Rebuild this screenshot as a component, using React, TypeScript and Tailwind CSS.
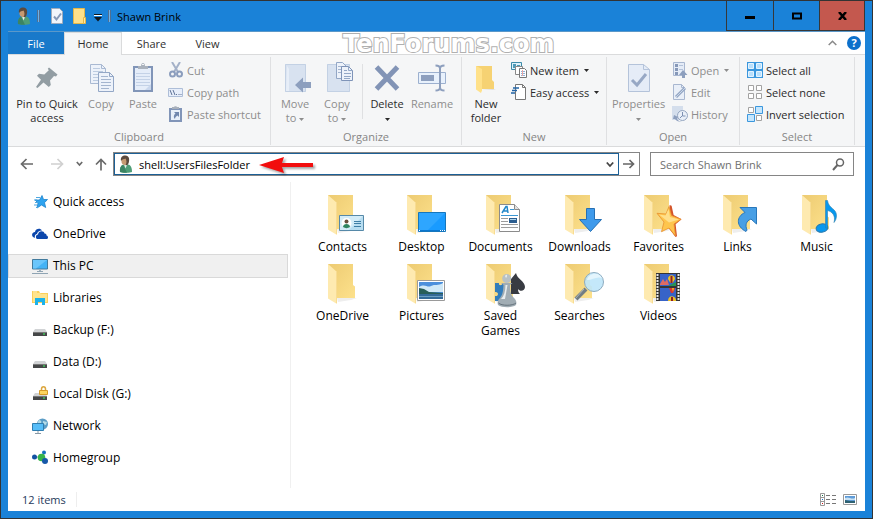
import React, { useState } from 'react';

const NAV_ITEMS = [
  { id: 'quick', label: 'Quick access' },
  { id: 'onedrive', label: 'OneDrive' },
  { id: 'pc', label: 'This PC' },
  { id: 'libraries', label: 'Libraries' },
  { id: 'drive-f', label: 'Backup (F:)' },
  { id: 'drive-d', label: 'Data (D:)' },
  { id: 'locked', label: 'Local Disk (G:)' },
  { id: 'network', label: 'Network' },
  { id: 'homegroup', label: 'Homegroup' }
];

const FOLDERS = [
  'Contacts', 'Desktop', 'Documents', 'Downloads', 'Favorites', 'Links', 'Music',
  'OneDrive', 'Pictures', 'Saved Games', 'Searches', 'Videos'
];

const Icon: React.FC<{ size: number; children: React.ReactNode }> = ({ size, children }) => (
  <svg width={size} height={size} viewBox={`0 0 ${size} ${size}`} fill="none" className="shrink-0" aria-hidden="true">
    {children}
  </svg>
);

const Caret: React.FC = () => (
  <svg width="5" height="3" viewBox="0 0 5 3" className="inline-block shrink-0 align-middle" aria-hidden="true">
    <path d="M0 0h5L2.5 3z" fill="currentColor" />
  </svg>
);

const UserIcon: React.FC = () => (
  <Icon size={18}>
    <path d="M3 17c-.5-4 1-7 4-7.500h4c3 .5 4 3.500 4 7.500-2 1-9 1-12 0z" fill="#4f9e78" />
    <path d="M3 17c-.5-3.500.5-6.500 3-7.300L10 17.700c-3 .2-5.500 0-7-.7z" fill="#3c8463" />
    <path d="M7 9.500l1.500 4L10 10z" fill="#e8efe9" />
    <ellipse cx="8" cy="5.700" rx="3.600" ry="4.400" fill="#c69a72" />
    <path d="M4 6c-.8-4.500 2-5.700 4.500-5.500C12 .8 13 4 11.600 8c-.6 2-2 2.500-3 2C10 8 9.500 5 8.500 3.500 7 4.300 5 4.200 4 6z" fill="#5b4a3d" />
  </Icon>
);

const PinIcon = () => (
  <Icon size={32}>
    <path d="M18 5.500l8.500 7-1.500 2-2-.6-4 4.500.8 4.600-2 2-5.300-4.600L6.500 26 5 25l5-7.300-4-4 2-2 5.300.7 4.500-4.200-1-1.500z" fill="#929da3" />
  </Icon>
);

const CopyIcon = () => (
  <Icon size={32}>
    <path d="M5.500 2.500h11l4 4v15h-15z" fill="#edf2fa" stroke="#a9b9d2" />
    <path d="M16.500 2.500v4h4" stroke="#a9b9d2" />
    <path d="M8 6.500h7M8 9.500h10M8 12.500h10M8 15.500h10M8 18.500h8" stroke="#bccbe0" />
    <path d="M13.500 10.500h11l4 4v15h-15z" fill="#edf2fa" stroke="#93a7c6" />
    <path d="M24.500 10.500v4h4" stroke="#93a7c6" />
    <path d="M16 14.500h7M16 17.500h10M16 20.500h10M16 23.500h10M16 26.500h8" stroke="#a4b5cf" />
  </Icon>
);

const PasteIcon = () => (
  <Icon size={32}>
    <path d="M6 4h20v26H6z" fill="#8195b8" />
    <path d="M8 6h16v22H8z" fill="#e5edf9" />
    <path d="M9 11.500h14M9 14.500h14M9 17.500h14M9 20.500h14M9 23.500h14" stroke="#c4d2e7" />
    <path d="M11 7V4h3c0-4 4-4 4 0h3v3z" fill="#a9b1bc" />
    <path d="M15 2.500h2" stroke="#f5f6f7" />
    <path d="M18 28h6v-6z" fill="#c9d7ed" />
  </Icon>
);

const MoveIcon = () => (
  <Icon size={32}>
    <path d="M6 2h21v28H6z" fill="#d8e2f0" />
    <path d="M6.500 2.500h20v27h-20z" stroke="#c3d1e4" />
    <path d="M8 4l2 3v22H7z" fill="#e7eef8" />
    <path d="M16 23l8-7.500V20h8v6h-8v4.500z" fill="#8d9fbe" />
  </Icon>
);

const CopyToIcon = () => (
  <Icon size={32}>
    <path d="M6 2h23v28H6z" fill="#d8e2f0" />
    <path d="M6.500 2.500h22v27h-22z" stroke="#c3d1e4" />
    <path d="M15.500.500h6l4 4v12h-10z" fill="#edf2fa" stroke="#93a7c6" />
    <path d="M17 4.500h4M17 7.500h4M17 10.500h4" stroke="#a4b5cf" />
    <path d="M20.500 4.500h7l4 4v10h-11z" fill="#edf2fa" stroke="#7f94b8" />
    <path d="M27.500 4.500v4h4M23 8.500h3M23 11.500h7M23 14.500h7M23 16.500h6" stroke="#93a7c6" />
  </Icon>
);

const DeleteIcon = () => (
  <Icon size={32}>
    <path d="M5.500 5l21 22M26.500 5l-21 22" stroke="#8294b6" strokeWidth="5" />
  </Icon>
);

const RenameIcon = () => (
  <Icon size={32}>
    <path d="M2.500 10.500h27v11h-27z" fill="#e8f1fc" stroke="#9cb0cf" />
    <path d="M5 13h13v6H5z" fill="#8d9fbe" />
    <path d="M19.500 3.500c3 0 4.500.5 4.500 3v19c0 2.500-1.500 3-4.500 3M28.500 3.500c-3 0-4.500.5-4.500 3v19c0 2.500 1.500 3 4.500 3" stroke="#8d9fbe" strokeWidth="2" />
  </Icon>
);

const NewFolderIcon = () => (
  <Icon size={32}>
    <path d="M6 4h16v14l2 2v7H12z" fill="#f6d273" />
    <path d="M6 4l6 3v21.500L11 31l-5-3.500z" fill="#ffe18a" />
    <path d="M24 27h2l-3 1H12z" fill="#ddd" />
  </Icon>
);

const PropertiesIcon = () => (
  <Icon size={32}>
    <path d="M5.500 2.500h15l6 5v22h-21z" fill="#e5ecf7" stroke="#b4c3da" />
    <path d="M20.500 2.500v5h6" stroke="#b4c3da" />
    <path d="M9 18l5 5 9-11" stroke="#97a8c5" strokeWidth="3" />
  </Icon>
);

const CutIcon = () => (
  <Icon size={16}>
    <path d="M4 0l6 10M12 0L6 10" stroke="#a4b1c8" strokeWidth="2" />
    <ellipse cx="4.500" cy="12" rx="2.500" ry="2.500" stroke="#8b9dbd" strokeWidth="2" />
    <ellipse cx="11.500" cy="12" rx="2.500" ry="2.500" stroke="#8b9dbd" strokeWidth="2" />
  </Icon>
);

const CopyPathIcon = () => (
  <Icon size={16}>
    <path d="M.5 4.500h14v8H.5z" fill="#e7eefa" stroke="#aebed8" />
    <path d="M2 6l2 5M5 6l2 5M8 10.500h1M10.500 10.500h1M12.500 10.500h1" stroke="#5f7397" />
  </Icon>
);

const PasteShortcutIcon = () => (
  <Icon size={16}>
    <path d="M1 2h13v14H1z" fill="#8195b8" />
    <path d="M3 4h9v10H3z" fill="#e9f0fa" />
    <path d="M4 3V1h2c0-1 3-1 3 0h2v2z" fill="#a9b1bc" />
    <path d="M6 6h5v5L9.500 9.500C8 10.500 7 11.500 7 13c-2-2-1-4.500.5-5.500z" fill="#7187ae" />
  </Icon>
);

const NewItemIcon = () => (
  <Icon size={16}>
    <path d="M.5.500h10v7H.5z" fill="#dff1fa" stroke="#3c8ba8" />
    <path d="M2 2h3v4H2zM6 3h3v1H6z" fill="#4d9bb8" />
    <path d="M4.500 4.500h7v8h-7z" fill="#fff" stroke="#888" />
    <path d="M8.500 6.500h5l2 2v7h-7z" fill="#fff" stroke="#777" />
    <path d="M10 9.500h4M10 11.500h4M10 13.500h4" stroke="#8fb0d6" />
    <path d="M11.500 8v6" stroke="#e9a7a7" />
  </Icon>
);

const EasyAccessIcon = () => (
  <Icon size={16}>
    <path d="M4.500.500h7l3 3v12h-10z" fill="#fff" stroke="#777" />
    <path d="M11.500.500v3h3" stroke="#777" />
    <path d="M2 4h6M1 6.500h5M0 9h4" stroke="#2163a5" strokeWidth="1.500" />
  </Icon>
);

const OpenIcon = () => (
  <Icon size={16}>
    <path d="M1.500.500h11v13h-11z" fill="#e5ecf7" stroke="#a8b7d0" />
    <path d="M3 2h3v3H3zM3 6h3v3H3zM3 10h3v3H3z" fill="#8698b8" />
    <path d="M7 3.500h4M7 7.500h4" stroke="#b4c3da" />
    <path d="M11 8l4.500 5H13v3h-3v-3H7z" fill="#8d9fbe" />
  </Icon>
);

const EditIcon = () => (
  <Icon size={16}>
    <path d="M1.500.500h8l3 3v12h-11z" fill="#e9eff8" stroke="#a8b7d0" />
    <path d="M9.500.500v3h3" stroke="#a8b7d0" />
    <path d="M4 13L13 4" stroke="#94a7c5" strokeWidth="3" />
    <path d="M4 13L13 4" stroke="#c9d6e8" />
  </Icon>
);

const HistoryIcon = () => (
  <Icon size={16}>
    <path d="M0 0h11v14H0z" fill="#d4deec" />
    <circle cx="10.500" cy="9.500" r="5" fill="#e9eff8" stroke="#94a5c0" />
    <path d="M10.500 6v4h3M8 12l2-2" stroke="#7d90b2" />
    <path d="M2 9l4 2-1 2c1 2 4 3 6 3-4 0-7-1-8-3H1z" fill="#8d9fbe" />
  </Icon>
);

const SelectAllIcon = () => (
  <Icon size={16}>
    <path d="M0 0h16v16H0z" fill="#3b97dd" />
    <path d="M1.500 1.500h5v5h-5zM9.500 1.500h5v5h-5zM1.500 9.500h5v5h-5zM9.500 9.500h5v5h-5z" fill="#b9e0fc" stroke="#e5f4ff" />
  </Icon>
);

const SelectNoneIcon = () => (
  <Icon size={16}>
    <path d="M1.500 1.500h5v5h-5zM9.500 1.500h5v5h-5zM1.500 9.500h5v5h-5zM9.500 9.500h5v5h-5z" fill="#fff" stroke="#a2a2a2" />
  </Icon>
);

const InvertIcon = () => (
  <Icon size={16}>
    <path d="M1.500 1.500h5v5h-5zM9.500 9.500h5v5h-5z" fill="#fff" stroke="#a2a2a2" />
    <path d="M8.500.500h7v7h-7zM.5 8.500h7v7h-7z" fill="#c5e6fd" stroke="#3b97dd" />
  </Icon>
);

const NavIcon: React.FC<{ id: string }> = ({ id }) => {
  switch (id) {
    case 'quick':
      return (
        <Icon size={16}>
          <path d="M10 1.500l1.500 4h4l-3 3.200 1.200 4.800L9.500 11 5 14l1-5-3-3h4.500z" fill="#2ea3ef" stroke="#1c82cc" strokeWidth=".8" />
          <path d="M4 3.500h4M2 6h3M3 8.500h3M2 11h3M4 13.500h2" stroke="#4fa8e0" />
        </Icon>
      );
    case 'onedrive':
      return (
        <Icon size={16}>
          <path d="M1 11c-2-2-.5-5 2-5 .5-3 5-4.500 7-1.500-3 0-4.500 1.500-5 3.500-2 .3-2.500 2-2 4z" fill="#0c47ac" />
          <path d="M5 13c-2-1.500-1-4.500 1-4.500.5-4 6-4 6.500-1 2 0 2 1.500 2 2 2 .5 2 3.500 0 3.500z" fill="#0c47ac" />
        </Icon>
      );
    case 'pc':
      return (
        <Icon size={16}>
          <path d="M.5 1.500h15v9.500H.5z" fill="#44b3f5" stroke="#427b9d" />
          <path d="M1 2h14L4 10.500H1z" fill="#6ac6fb" />
          <path d="M7 11.500h2V13H7z" fill="#9fb2c0" />
          <path d="M5 13.500h6M0 15.500h16" stroke="#8fa4b3" />
        </Icon>
      );
    case 'libraries':
      return (
        <Icon size={16}>
          <path d="M0 1h7l1 2h8v10H0z" fill="#fbcf5b" />
          <path d="M1 3h7l1 1h6v8H1z" fill="#ffe48d" />
          <path d="M3 8h10v7h-3v-3H6v3H3z" fill="#1cb2ea" />
          <path d="M1 2h4" stroke="#fff3c6" />
        </Icon>
      );
    case 'network':
      return (
        <Icon size={16}>
          <circle cx="10.500" cy="6" r="5.500" fill="#5b9dc6" />
          <path d="M7 2c2 0 3 2 2 3s-3 1-3 0 0-2 1-3zM11 3l4 1-1 3-3-1z" fill="#b4dbe7" />
          <path d="M.5 5.500h11v7H.5z" fill="#56bdf8" stroke="#307eb0" />
          <path d="M6 13v2M3 15.500h6" stroke="#8799a6" />
        </Icon>
      );
    case 'homegroup':
      return (
        <Icon size={16}>
          <path d="M3 7l7 0 2-4M10 7l3 4" stroke="#8aacc0" />
          <circle cx="2.500" cy="7" r="2.500" fill="#1352a2" />
          <circle cx="12" cy="2.500" r="2" fill="#1670bd" />
          <circle cx="9.500" cy="7.500" r="3.800" fill="#37b44a" />
          <circle cx="13" cy="11" r="3" fill="#1758a8" />
        </Icon>
      );
    default:
      return (
        <Icon size={16}>
          <path d="M3 7h10l2 3H1z" fill="#d1d3d5" />
          <path d="M1 10h14v4H1z" fill="#454748" />
          <path d="M1 10.500h14" stroke="#777" />
          <path d="M11 11.500h2v1h-2z" fill="#3fff60" />
          {id === 'locked' && (
            <>
              <path d="M9.500 5V3c0-3 4-3 4 0v2" stroke="#dca73f" strokeWidth="1.500" />
              <path d="M7.500 4.500h8v4h-8z" fill="#fcd45e" stroke="#d79b28" />
            </>
          )}
        </Icon>
      );
  }
};

const FolderOverlay: React.FC<{ name: string }> = ({ name }) => {
  switch (name) {
    case 'Contacts':
      return (
        <>
          <path d="M20.500 24.500h24v15h-24z" fill="#b7ddf1" stroke="#5689a8" />
          <path d="M21 25h23L30 39h-9z" fill="#d3ecf8" />
          <circle cx="27.500" cy="32" r="5" fill="#fff" />
          <path d="M24 36c0-4 7-4 7 0-2 1.500-5 1.500-7 0z" fill="#2f8561" />
          <circle cx="27.500" cy="30.500" r="2" fill="#69513f" />
          <path d="M35 30.500h7M35 32.500h7M35 35.500h7" stroke="#3e7fa6" />
        </>
      );
    case 'Desktop':
      return (
        <>
          <path d="M20.500 21.500h27v19h-27z" fill="#199bff" stroke="#1677bd" />
          <path d="M21 22h26L29 40h-8z" fill="#2ea6ff" />
          <path d="M21 39.500h26" stroke="#0a77cf" />
          <path d="M21 39.500h1M42 39.500h1M44 39.500h1M46 39.500h1" stroke="#fff" />
        </>
      );
    case 'Documents':
      return (
        <>
          <path d="M22.500 13.500h15l5 5v22h-20z" fill="#fff" stroke="#8b8b8b" />
          <path d="M37.500 13.500v5h5" fill="#e2e2e2" stroke="#8b8b8b" />
          <path d="M25 22l4-6.500h1l1 6.500M27 20h4" stroke="#2287c9" strokeWidth="1.500" />
          <path d="M33 18.500h4M24 24.500h17" stroke="#3c98d4" />
          <path d="M24 27.500h7M24 30.500h7M24 33.500h17M24 36.500h17" stroke="#9c9c9c" />
          <path d="M32 27h8v5h-8z" fill="#2c5d8f" />
          <path d="M33 28h6v1h-6z" fill="#abd6ef" />
        </>
      );
    case 'Downloads':
      return <path d="M30.500 17.500h8v11h7L34.500 40.500 23.500 28.500h7z" fill="#3f9aeb" stroke="#2670b4" />;
    case 'Favorites':
      return (
        <>
          <path d="M34.600 14l2 .8 2 9.200 8 4.300-6 5 1.400 12-1.500.7-6.500-8.500z" fill="#d4542a" />
          <path d="M34 15.500l2.500 9 9.500 3.800-7 4.700 1.500 12-6.500-8-7.500 3.700 2.500-9.700-7-8.700 9 .7z" fill="#fec54d" stroke="#e9912e" strokeWidth=".8" />
          <path d="M33.500 18l1.500 8 9 2.500-10 3-10-8 6.500 1z" fill="#ffdf8b" />
        </>
      );
    case 'Links':
      return <path d="M26 16.500h16.500V33L37 28c-5 2-6 6-4 11l-1 1.500c-10-5-10-15-1-19z" fill="#489fe5" stroke="#2977ba" />;
    case 'Music':
      return (
        <>
          <ellipse cx="29" cy="37" rx="6" ry="4.200" fill="#0798ef" stroke="#2779ad" transform="rotate(-12 29 37)" />
          <path d="M32.500 37V9.500h2c1 8 9 8 9 15 0 3-1 5-2.500 7 2-7-2-11-6.500-12V37z" fill="#0798ef" stroke="#2e7fac" strokeWidth=".6" />
        </>
      );
    case 'Pictures':
      return (
        <>
          <path d="M19.500 20.500h27v20h-27z" fill="#fff" stroke="#9a9a9a" />
          <path d="M21 22h24v17H21z" fill="#4b8fdc" />
          <path d="M21 27c6-4 8 1 12-1s7 0 12-3v9H21z" fill="#cfe8f7" />
          <path d="M21 28l5 1 5 3 14 1v1H21z" fill="#285e58" />
          <path d="M21 34h24v5H21z" fill="#336a98" />
          <path d="M21 36.500h24" stroke="#6b9fc2" />
        </>
      );
    case 'Saved Games':
      return (
        <>
          <path d="M18 23h4c-1 3 4 3 3 0h8v18H18v-5c4 1 4-5 0-4z" fill="#327dbb" />
          <path d="M39 13c1 6 9 8 9 14 0 4-5 5-7 2 0 3 1 4 2 5h-9V19z" fill="#383b42" />
          <circle cx="29.700" cy="18.500" r="4.500" fill="#b8c1c5" />
          <path d="M24 23h11.500l-2.500 2c0 7 1 10 4 13 2 2 3 4 2 7-4 3-14 3-18 0-1-3 0-5 2-7 3-4 3-7 3.500-13z" fill="#a1adb4" />
          <path d="M28 16c2-3 3 0 1 2zM28.500 25h2l-2.500 14h-4c3-3 4.500-8 4.500-14z" fill="#e8edef" />
          <path d="M21.500 43c3 3 14 3 17.500 0" stroke="#65737c" />
        </>
      );
    case 'Searches':
      return (
        <>
          <path d="M30 29L20 39" stroke="#737d83" strokeWidth="4" />
          <path d="M28 29L19 39" stroke="#aeb6b9" />
          <circle cx="38" cy="22" r="9.500" fill="#bee5fa" fillOpacity=".9" stroke="#8dabbf" />
          <path d="M31 20c1-7 12-9 15-2-5-2-10 2-15 2z" fill="#e4f5fd" />
        </>
      );
    case 'Videos':
      return (
        <>
          <path d="M21 13h24v28H21z" fill="#353535" />
          <path d="M22.500 14v27M43.500 14v27" stroke="#e8e8e8" strokeWidth="2" strokeDasharray="2 1" />
          <path d="M25 14h16v12H25zM25 28h16v13H25z" fill="#3763c8" />
          <path d="M25 24l3-5 2 3 2-3 2 6h-9z" fill="#e06b62" />
          <path d="M33 26h8v-4z" fill="#259454" />
          <path d="M33 19c0-5 7-5 7 0l-2.500 4h-2z" fill="#edc027" />
          <path d="M35.500 16h2v7h-2z" fill="#8e1f28" />
          <path d="M34 28h6v1l-2 4h-2z" fill="#d9362f" />
          <path d="M37 28h2l-1 4z" fill="#edc027" />
          <path d="M33 41c0-6 7-6 8-1v1z" fill="#edc027" />
          <path d="M36 37h2v4h-2z" fill="#8e1f28" />
        </>
      );
    default:
      return null;
  }
};

const FolderIcon: React.FC<{ name: string }> = ({ name }) => (
  <Icon size={48}>
    <defs>
      <linearGradient id={`back-${name.charAt(0)}${name.length}`} x1="0" y1="0" x2="1" y2="1">
        <stop offset="0" stopColor="#edcb72" />
        <stop offset="1" stopColor="#fde18c" />
      </linearGradient>
    </defs>
    <path d="M18 38h20l-6 2-13 2z" fill="#eeeeee" />
    <path d="M9 4h25v21l2 1.500V38H18L9 30z" fill={`url(#back-${name.charAt(0)}${name.length})`} />
    <path d="M9 4l9 8v32l-9-5.500z" fill="#feeab0" />
    <path d="M17.500 12v31" stroke="#f8dc92" />
    <FolderOverlay name={name} />
  </Icon>
);

interface BigButtonProps {
  icon: React.ReactNode;
  width: string;
  disabled?: boolean;
  children: React.ReactNode;
}

const BigButton: React.FC<BigButtonProps> = ({ icon, width, disabled, children }) => (
  <button disabled={disabled} className={`${width} shrink-0 flex flex-col items-center pt-[3px] text-center leading-[14px] text-[#2b2b2b] disabled:text-[#8d8d8d]`}>
    {icon}
    <span className="mt-[3px] whitespace-nowrap">{children}</span>
  </button>
);

interface SmallButtonProps {
  icon: React.ReactNode;
  label: string;
  disabled?: boolean;
  menu?: boolean;
}

const SmallButton: React.FC<SmallButtonProps> = ({ icon, label, disabled, menu }) => (
  <button disabled={disabled} className="flex h-[22px] items-center gap-[3px] whitespace-nowrap text-[#2b2b2b] disabled:text-[#8d8d8d]">
    {icon}
    <span>{label}</span>
    {menu && <span className="ml-0.5 flex"><Caret /></span>}
  </button>
);

const RibbonGroup: React.FC<{ title: string; width: string; children: React.ReactNode }> = ({ title, width, children }) => (
  <section className={`${width} shrink-0 border-r border-[#dfe0e2] pt-0.5`}>
    <div className="flex h-[70px] items-start">{children}</div>
    <h2 className="text-center leading-4 text-[#858585]">{title}</h2>
  </section>
);

const TitleBar: React.FC = () => (
  <header className="flex h-[30px] items-stretch justify-between">
    <div className="flex items-center pl-[7px]">
      <UserIcon />
      <span className="ml-1 h-3 w-[3px] border-x border-[#4f6f92] bg-[#6db2ea]" />
      <button aria-label="Properties" className="ml-2.5">
        <Icon size={16}>
          <path d="M1.500.500h8l3 3v12h-11z" fill="#f1f5fb" stroke="#a0acbd" />
          <path d="M4 8.500l2.500 3 4.500-6" stroke="#8799b7" strokeWidth="2" />
        </Icon>
      </button>
      <button aria-label="New folder" className="ml-1.5">
        <Icon size={16}>
          <path d="M1.500.500h11v15h-11z" fill="#fde08a" stroke="#e4b748" />
          <path d="M11.500 9.500h2v6h-2z" fill="#ffe8a1" stroke="#e4b748" />
        </Icon>
      </button>
      <button aria-label="Customize Quick Access Toolbar" className="mt-1 ml-1.5">
        <svg width="8" height="8" viewBox="0 0 8 8" aria-hidden="true">
          <path d="M0 1h8" stroke="#fff" strokeWidth="2" />
          <path d="M0 .500h8" stroke="#101820" />
          <path d="M0 3h8L4 7.500z" fill="#101820" />
        </svg>
      </button>
      <span className="ml-1.5 h-3 w-[3px] border-x border-[#4f6f92] bg-[#6db2ea]" />
      <h1 className="ml-1.5 text-black">Shawn Brink</h1>
    </div>
    <div className="flex">
      <button aria-label="Minimize" className="flex w-[47px] items-center justify-center border-b border-l border-[#373737]">
        <svg width="10" height="3" className="mt-1"><path d="M0 0h10v3H0z" fill="#000" /></svg>
      </button>
      <button aria-label="Maximize" className="flex w-[46px] items-center justify-center border-b border-l border-[#373737]">
        <svg width="10" height="8"><path d="M1 1.500h8v5H1z" fill="none" stroke="#000" strokeWidth="2" /></svg>
      </button>
      <button aria-label="Close" className="flex w-[46px] items-center justify-center border-x border-b border-[#373737] bg-[#c4584e]">
        <svg width="9" height="8" viewBox="0 0 9 8"><path d="M1 0l7 8M8 0L1 8" stroke="#000" strokeWidth="2.500" /></svg>
      </button>
    </div>
  </header>
);

const Tabs: React.FC = () => (
  <nav className="flex h-[23px] items-stretch border-t border-[#5b98c9] bg-white text-[#2f2f2f]">
    <button className="w-14 bg-[#1979ca] text-white">File</button>
    <button className="relative z-10 -mb-px w-[58px] border-x border-t border-[#dadbdc] bg-[#f5f6f7] pb-0.5">Home</button>
    <button className="w-[59px]">Share</button>
    <button className="w-[53px]">View</button>
    <div className="relative z-10 ml-[109px] text-[24px] leading-[24px] font-bold text-white [-webkit-text-stroke:2px_#b0b0b0] [font-family:'DejaVu_Sans',sans-serif] [paint-order:stroke]">TenForums.com</div>
    <div className="ml-auto flex items-center gap-2.5 pr-1">
      <button aria-label="Minimize the Ribbon">
        <svg width="9" height="6" viewBox="0 0 9 6" fill="none"><path d="M.7 5l3.800-3.800L8.300 5" stroke="#8a8a8a" strokeWidth="1.500" /></svg>
      </button>
      <button aria-label="Help" className="flex h-3.5 w-3.5 items-center justify-center rounded-full bg-[#0c70cb] leading-[14px] font-bold text-white">?</button>
    </div>
  </nav>
);

const Ribbon: React.FC = () => (
  <div className="flex border-y border-[#dadbdc] bg-[#f5f6f7] pt-0.5 pb-px">
    <RibbonGroup title="Clipboard" width="w-[263px]">
      <div className="flex w-full pl-1.5">
        <BigButton icon={<PinIcon />} width="w-[66px]">Pin to Quick<br />access</BigButton>
        <BigButton icon={<CopyIcon />} width="w-[42px]" disabled>Copy</BigButton>
        <BigButton icon={<PasteIcon />} width="w-[42px]" disabled>Paste</BigButton>
        <div className="ml-1">
          <SmallButton icon={<CutIcon />} label="Cut" disabled />
          <SmallButton icon={<CopyPathIcon />} label="Copy path" disabled />
          <SmallButton icon={<PasteShortcutIcon />} label="Paste shortcut" disabled />
        </div>
      </div>
    </RibbonGroup>
    <RibbonGroup title="Organize" width="w-[191px]">
      <div className="flex w-full pl-[3px]">
        <BigButton icon={<MoveIcon />} width="w-[42px]" disabled>Move<br />to <Caret /></BigButton>
        <BigButton icon={<CopyToIcon />} width="w-[42px]" disabled>Copy<br />to <Caret /></BigButton>
        <span className="mt-[5px] ml-1 h-[55px] w-px bg-[#dfe0e2]" />
        <BigButton icon={<DeleteIcon />} width="w-12">Delete<br /><Caret /></BigButton>
        <BigButton icon={<RenameIcon />} width="w-[42px]" disabled>Rename</BigButton>
      </div>
    </RibbonGroup>
    <RibbonGroup title="New" width="w-[145px]">
      <div className="flex w-full pl-[3px]">
        <BigButton icon={<NewFolderIcon />} width="w-[42px]">New<br />folder</BigButton>
        <div className="ml-1">
          <SmallButton icon={<NewItemIcon />} label="New item" menu />
          <SmallButton icon={<EasyAccessIcon />} label="Easy access" menu />
        </div>
      </div>
    </RibbonGroup>
    <RibbonGroup title="Open" width="w-[133px]">
      <div className="flex w-full pl-[3px]">
        <BigButton icon={<PropertiesIcon />} width="w-[57px]" disabled>Properties<br /><Caret /></BigButton>
        <div className="ml-[5px]">
          <SmallButton icon={<OpenIcon />} label="Open" disabled menu />
          <SmallButton icon={<EditIcon />} label="Edit" disabled />
          <SmallButton icon={<HistoryIcon />} label="History" disabled />
        </div>
      </div>
    </RibbonGroup>
    <RibbonGroup title="Select" width="w-[115px]">
      <div className="pl-[7px]">
        <SmallButton icon={<SelectAllIcon />} label="Select all" />
        <SmallButton icon={<SelectNoneIcon />} label="Select none" />
        <SmallButton icon={<InvertIcon />} label="Invert selection" />
      </div>
    </RibbonGroup>
  </div>
);

const AddressRow: React.FC = () => (
  <div className="flex h-[35px] items-start pt-[5px] pr-[11px] pl-3">
    <div className="flex h-6 w-[93px] shrink-0 items-center text-[#6a6a6a]">
      <button aria-label="Back">
        <svg width="14" height="12" viewBox="0 0 14 12" fill="none"><path d="M13 6H2M6.500 1L1.500 6l5 5" stroke="currentColor" strokeWidth="1.700" /></svg>
      </button>
      <button aria-label="Forward" disabled className="ml-4 text-[#d0d0d0]">
        <svg width="14" height="12" viewBox="0 0 14 12" fill="none"><path d="M1 6h11M7.500 1l5 5-5 5" stroke="currentColor" strokeWidth="1.700" /></svg>
      </button>
      <button aria-label="Recent locations" className="ml-3">
        <svg width="7" height="6" viewBox="0 0 7 6" fill="none"><path d="M.8 1l2.700 3L6.200 1" stroke="currentColor" strokeWidth="1.700" /></svg>
      </button>
      <button aria-label="Up" className="ml-3">
        <svg width="12" height="13" viewBox="0 0 12 13" fill="none"><path d="M6 12.500V2M1 6.500l5-5 5 5" stroke="currentColor" strokeWidth="1.700" /></svg>
      </button>
    </div>
    <div className="flex h-6 min-w-0 flex-1 border border-[#858585]">
      <div className="relative flex min-w-0 flex-1 items-center border border-[#1c6096] pl-0.5">
        <UserIcon />
        <input aria-label="Address" defaultValue="shell:UsersFilesFolder" className="ml-1 min-w-0 flex-1 text-black outline-none" />
        <button aria-label="Previous locations" className="px-1 text-[#444]">
          <svg width="8" height="7" viewBox="0 0 8 7" fill="none"><path d="M.8 1.500L4 5l3.200-3.500" stroke="currentColor" strokeWidth="1.800" /></svg>
        </button>
        <svg width="60" height="22" viewBox="0 0 60 22" className="pointer-events-none absolute top-0 left-36 drop-shadow-[2px_2px_1px_rgba(0,0,0,0.35)]" aria-hidden="true">
          <path d="M0 11l25-8-2 6h31v4H23l2 6z" fill="#f20d0d" />
        </svg>
      </div>
      <button aria-label="Go" className="flex w-5 items-center justify-center text-[#666]">
        <svg width="12" height="10" viewBox="0 0 12 10" fill="none"><path d="M0 5h10.500M6.500 1l4 4-4 4" stroke="currentColor" strokeWidth="1.700" /></svg>
      </button>
    </div>
    <div className="ml-2.5 flex h-6 w-[204px] shrink-0 items-center border border-[#858585] pr-2 pl-[9px]">
      <input type="search" aria-label="Search Shawn Brink" placeholder="Search Shawn Brink" className="min-w-0 flex-1 outline-none placeholder:text-[#707070]" />
      <svg width="13" height="13" viewBox="0 0 13 13" fill="none" aria-hidden="true">
        <circle cx="8" cy="4.500" r="3.500" stroke="#666" strokeWidth="1.500" />
        <path d="M5.500 7l-4.500 5" stroke="#666" strokeWidth="2" />
      </svg>
    </div>
  </div>
);

const App: React.FC = () => {
  const [activeNav, setActiveNav] = useState('pc');

  return (
    <div className="flex min-h-screen flex-col border border-[#333] bg-[#1a82d8] px-[7px] pb-[7px] text-[11px] leading-[15px] [font-family:'Open_Sans','Noto_Sans',sans-serif]">
      <TitleBar />
      <Tabs />
      <Ribbon />
      <div className="flex flex-1 flex-col bg-white">
        <AddressRow />
        <main className="flex flex-1 text-[12px] leading-[15px]">
          <aside className="w-[283px] shrink-0 border-r border-[#f0f0f0] pt-2 pr-0.5">
            <ul className="flex flex-col gap-2">
              {NAV_ITEMS.map(item => (
                <li key={item.id}>
                  <button
                    onClick={() => setActiveNav(item.id)}
                    className={`flex h-6 w-full items-center gap-[5px] border pb-px pl-[23px] text-black ${
                      activeNav === item.id ? 'border-[#d9d9d9] bg-[#f0f0f0]' : 'border-transparent'
                    }`}
                  >
                    <NavIcon id={item.id} />
                    {item.label}
                  </button>
                </li>
              ))}
            </ul>
          </aside>
          <ul className="flex flex-1 flex-wrap content-start gap-y-1.5 pt-[9px] pl-3">
            {FOLDERS.map(name => (
              <li key={name} className="w-[79px]">
                <button className="flex w-full flex-col items-center px-3 text-center text-black">
                  <FolderIcon name={name} />
                  <span>{name}</span>
                </button>
              </li>
            ))}
          </ul>
        </main>
        <footer className="flex h-[23px] items-center justify-between pr-2 pl-3.5 text-[#1e395b]">
          <span className="border-r border-[#eeeeee] pr-2.5">12 items</span>
          <div className="flex items-center gap-1.5">
            <button aria-label="Details view">
              <svg width="17" height="13" viewBox="0 0 17 13" fill="none">
                <path d="M.5.500h4v12h-4zM.5 4.500h4M.5 8.500h4" stroke="#999" />
                <path d="M6 2.500h4M12 2.500h4M6 6.500h4M12 6.500h4M6 10.500h4M12 10.500h4" stroke="#777" />
                <path d="M2 2.500h1" stroke="#167445" /><path d="M2 6.500h1" stroke="#1670d0" /><path d="M2 10.500h1" stroke="#d01616" />
              </svg>
            </button>
            <button aria-label="Large icons view">
              <svg width="14" height="11" viewBox="0 0 14 11" fill="none">
                <path d="M.5.500h13v10H.5z" fill="#fff" stroke="#999" />
                <path d="M2 2h10v7H2z" fill="#5e9bd8" />
                <path d="M2 4c4-2 6 2 10 0v2H2z" fill="#c7e1f4" />
                <path d="M2 6l5 1h5v2H2z" fill="#2d6171" />
              </svg>
            </button>
          </div>
        </footer>
      </div>
    </div>
  );
};

export default App;
